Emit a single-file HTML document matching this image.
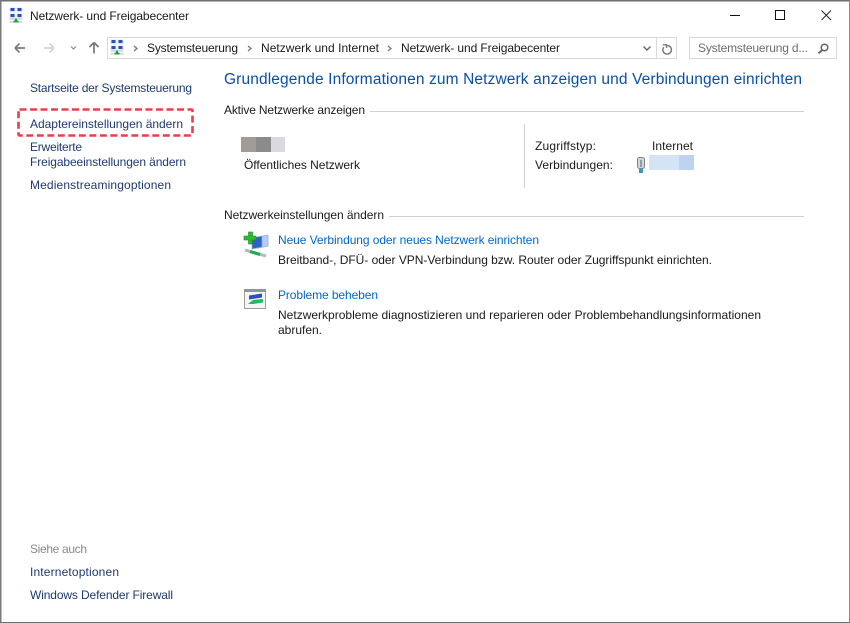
<!DOCTYPE html>
<html lang="de">
<head>
<meta charset="utf-8">
<title>Netzwerk- und Freigabecenter</title>
<style>
html,body{margin:0;padding:0;background:#fff;width:850px;height:623px;overflow:hidden}
svg{display:block}
text{font-family:"Liberation Sans",Arial,sans-serif;font-size:12px;fill:#1a1a1a}
.b{fill:#0066cc}
.n{fill:#1e3a6e}
</style>
</head>
<body>
<svg width="850" height="623" viewBox="0 0 850 623" xmlns="http://www.w3.org/2000/svg">
<defs>
<g id="net">
<rect x="0" y="0" width="6" height="5" fill="#dfe6f5"/><rect x="1" y="0.500" width="4" height="3" fill="#2a4fc0"/>
<rect x="7" y="0" width="6" height="5" fill="#dfe6f5"/><rect x="8" y="0.500" width="4" height="3" fill="#2a4fc0"/>
<rect x="0" y="6" width="6" height="5" fill="#dfe6f5"/><rect x="1" y="6.500" width="4" height="3" fill="#2a4fc0"/>
<rect x="7" y="6" width="6" height="5" fill="#dfe6f5"/><rect x="8" y="6.500" width="4" height="3" fill="#2a4fc0"/>
<rect x="0" y="11" width="13" height="1" fill="#c4c8cc"/>
<rect x="0" y="14" width="13" height="1" fill="#b4b8bc"/>
<rect x="4" y="13" width="5" height="2" fill="#16a34a"/>
<rect x="5.500" y="11" width="2" height="2" fill="#16a34a"/>
</g>
</defs>
<rect width="850" height="623" fill="#fff"/>
<!-- window border -->
<rect x="0" y="0" width="850" height="1.500" fill="#6e6e6e"/>
<rect x="0" y="0" width="1.500" height="623" fill="#7a7a7a"/>
<rect x="849" y="0" width="1" height="623" fill="#8a8a8a"/>
<rect x="0" y="622" width="850" height="1" fill="#6e6e6e"/>

<!-- title icon -->
<use href="#net" x="9.500" y="7.500"/>
<text x="30" y="20" textLength="159">Netzwerk- und Freigabecenter</text>

<!-- window controls -->
<rect x="730" y="15" width="10" height="1" fill="#111"/>
<rect x="775.500" y="10.500" width="9" height="9" fill="none" stroke="#111"/>
<path d="M821.500 10.500l9.500 9.500M831 10.500l-9.500 9.500" stroke="#222" stroke-width="1" fill="none"/>

<!-- nav buttons -->
<path d="M15 48h10M15 48l4.500-4.500M15 48l4.500 4.500" stroke="#7a7a7a" stroke-width="1.700" fill="none"/>
<path d="M54 48h-10M54 48l-4.500-4.500M54 48l-4.500 4.500" stroke="#d4d4d4" stroke-width="1.700" fill="none"/>
<path d="M71 46.500l2.500 2.500 2.500-2.500" stroke="#8a8a8a" stroke-width="1.200" fill="none"/>
<path d="M94 53.500v-11M94 42.500l-4.500 4.500M94 42.500l4.500 4.500" stroke="#777" stroke-width="1.700" fill="none"/>

<!-- address bar -->
<rect x="107.500" y="37.500" width="569" height="21" fill="#fff" stroke="#d9d9d9"/>
<rect x="656" y="38" width="1" height="20" fill="#d9d9d9"/>
<use href="#net" x="110.500" y="39.500"/>
<path d="M134 46l3 2.500-3 2.500" stroke="#777" stroke-width="1.300" fill="none"/>
<text x="147" y="52" textLength="91">Systemsteuerung</text>
<path d="M248 46l3 2.500-3 2.500" stroke="#777" stroke-width="1.300" fill="none"/>
<text x="261" y="52" textLength="118">Netzwerk und Internet</text>
<path d="M388 46l3 2.500-3 2.500" stroke="#777" stroke-width="1.300" fill="none"/>
<text x="401" y="52" textLength="159">Netzwerk- und Freigabecenter</text>
<path d="M643.500 46.500l3.500 3.500 3.500-3.500" stroke="#666" stroke-width="1.400" fill="none"/>
<path d="M667.500 44.500a4.300 4.300 0 1 1-3.800 1.700M662.800 43.800h3.800v3.200" stroke="#777" stroke-width="1.400" fill="none" transform="translate(0 1)"/>

<!-- search -->
<rect x="689.500" y="37.500" width="147" height="21" fill="#fff" stroke="#d9d9d9"/>
<text x="698" y="52" textLength="110" style="fill:#6d6d6d">Systemsteuerung d...</text>
<circle cx="824.500" cy="47.500" r="3.300" fill="none" stroke="#666" stroke-width="1.500"/>
<path d="M822 50.300l-3.500 3" stroke="#666" stroke-width="2" fill="none"/>

<!-- left nav -->
<text x="30" y="92" textLength="162" class="n">Startseite der Systemsteuerung</text>
<text x="30" y="128" textLength="153" class="n">Adaptereinstellungen ändern</text>
<text x="30" y="151" textLength="52" class="n">Erweiterte</text>
<text x="30" y="166" textLength="156" class="n">Freigabeeinstellungen ändern</text>
<text x="30" y="189" textLength="141" class="n">Medienstreamingoptionen</text>
<rect x="18.500" y="109.500" width="174" height="26" rx="1" fill="none" stroke="#e8404a" stroke-width="2.600" stroke-dasharray="7 3.500"/>

<text x="30" y="553" textLength="57" style="fill:#8a8a8a">Siehe auch</text>
<text x="30" y="576" textLength="89" class="n">Internetoptionen</text>
<text x="30" y="599" textLength="143" class="n">Windows Defender Firewall</text>

<!-- heading -->
<text x="224" y="84" textLength="578" style="font-size:15.500px;fill:#0a4fa8">Grundlegende Informationen zum Netzwerk anzeigen und Verbindungen einrichten</text>

<!-- active networks -->
<text x="224" y="114" textLength="141">Aktive Netzwerke anzeigen</text>
<rect x="370" y="111" width="434" height="1" fill="#cfcfcf"/>
<rect x="241" y="137" width="15" height="15" fill="#a09c97"/>
<rect x="256" y="137" width="15" height="15" fill="#8b8b8d"/>
<rect x="271" y="137" width="14" height="15" fill="#d8dbde"/>
<text x="244" y="169" textLength="116">Öffentliches Netzwerk</text>

<rect x="524" y="124" width="1" height="64" fill="#cfcfcf"/>
<text x="535" y="150" textLength="61">Zugriffstyp:</text>
<text x="652" y="150" textLength="41">Internet</text>
<text x="535" y="169" textLength="78">Verbindungen:</text>
<!-- connection icon -->
<rect x="637.500" y="157.500" width="7" height="11" rx="2" fill="#cfd6dc" stroke="#7d8791"/>
<rect x="640" y="160" width="2" height="7" fill="#8fa0ad"/>
<rect x="639" y="169" width="4" height="4" fill="#3a97c9"/>
<rect x="649" y="155" width="30" height="15" fill="#d4e3f6"/>
<rect x="679" y="155" width="15" height="15" fill="#bdd3f0"/>

<!-- settings -->
<text x="224" y="219" textLength="160">Netzwerkeinstellungen ändern</text>
<rect x="389" y="216" width="415" height="1" fill="#cfcfcf"/>

<!-- new connection icon -->
<g>
<path d="M258 237l10-2v11l-10 2z" fill="#b9cbef" stroke="#9fb2d6" stroke-width=".8"/>
<path d="M252 238l10-2v11l-10 2z" fill="#2f62c8" stroke="#8fa8d8" stroke-width=".8"/>
<rect x="248.500" y="232" width="4" height="12" fill="#35b935" stroke="#138a22" stroke-width=".6"/>
<rect x="244" y="236" width="12" height="4" fill="#35b935" stroke="#138a22" stroke-width=".6"/>
<rect x="248.800" y="236.300" width="3.400" height="3.400" fill="#35b935"/>
<path d="M245 250l21 6" stroke="#b4b9be" stroke-width="3" fill="none"/>
<path d="M250 251.500l10 3" stroke="#1fae55" stroke-width="3.200" fill="none"/>
</g>
<text x="278" y="244" textLength="261" class="b">Neue Verbindung oder neues Netzwerk einrichten</text>
<text x="278" y="264" textLength="434">Breitband-, DFÜ- oder VPN-Verbindung bzw. Router oder Zugriffspunkt einrichten.</text>

<!-- troubleshoot icon -->
<g>
<rect x="244.500" y="289.500" width="21" height="19" fill="#f3f5f7" stroke="#9a9fa4"/>
<rect x="244" y="289" width="22" height="3" fill="#8f959a"/>
<path d="M249 295.500l13-2v4l-13 2z" fill="#2a4fc0"/>
<path d="M248 304l5-4 10-1v3.500l-10 1.500z" fill="#22b866"/>
</g>
<text x="278" y="299" textLength="100" class="b">Probleme beheben</text>
<text x="278" y="319" textLength="483">Netzwerkprobleme diagnostizieren und reparieren oder Problembehandlungsinformationen</text>
<text x="278" y="334" textLength="44">abrufen.</text>
</svg>
</body>
</html>
